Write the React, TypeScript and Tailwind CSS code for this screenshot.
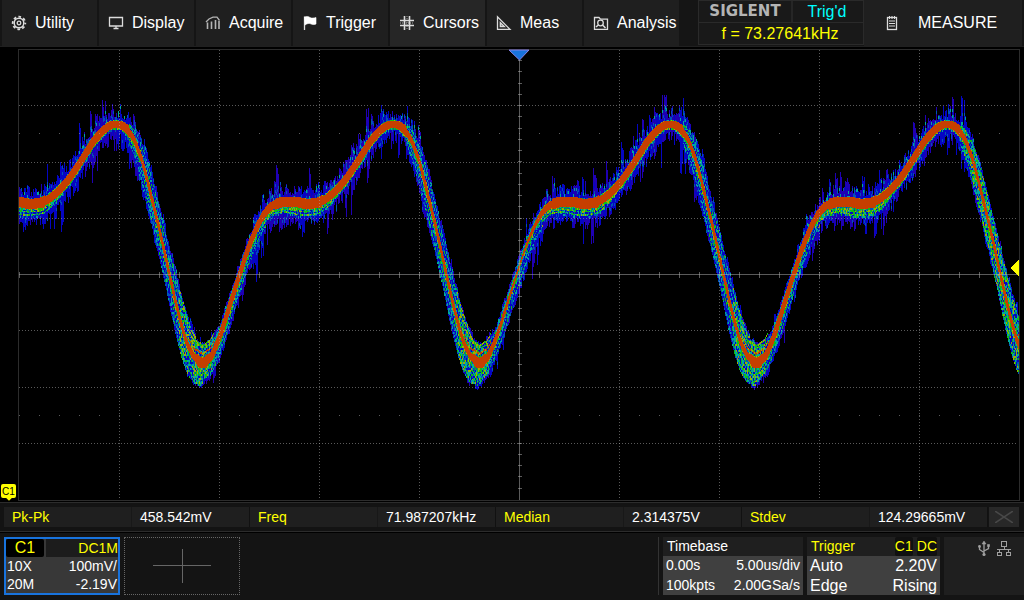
import React from "react";

const PERIOD = 277;
const PEAK_X = 116;
const TRIGGER_X = 519;

// one cycle of the trace: [offset from the peak, y]
const CYCLE = [
  [0, 124], [5, 125], [11, 129], [19, 142], [27, 165], [34, 193], [40, 217],
  [46, 243], [53, 275], [61, 310], [69, 340], [77, 357], [86, 364], [95, 357],
  [105, 332], [114, 303], [123, 275], [131, 250], [139, 230], [148, 213],
  [156, 205], [166, 202], [180, 202], [190, 204], [202, 203], [211, 198],
  [219, 191], [228, 181], [241, 162], [254, 141], [264, 130], [271, 125],
  [277, 124],
];

// how far the coloured band reaches above and below the core
const BAND = [
  [0, 4, 4], [20, 3, 5], [50, 3, 6], [70, 12, 18], [84, 18, 23], [92, 14, 14],
  [102, 4, 6], [130, 1, 4], [155, 3, 9], [180, 5, 14], [205, 5, 12],
  [225, 3, 5], [277, 4, 4],
];

// size of the blue noise above and below
const NOISE = [
  [0, 15, 19], [15, 15, 19], [32, 8, 12], [45, 5, 2], [65, 7, 1], [80, 4, 5],
  [95, 6, 9], [120, 6, 9], [140, 13, 17], [160, 16, 14], [185, 16, 12],
  [215, 15, 16], [245, 20, 20], [277, 15, 19],
];

const lerp = (points: number[][], at: number, col: number) => {
  let i = 1;
  while (i < points.length - 1 && points[i][0] < at) i++;
  const a = points[i - 1];
  const b = points[i];
  return a[col] + ((b[col] - a[col]) * (at - a[0])) / (b[0] - a[0]);
};

const phase = (x: number) =>
  (((x - PEAK_X) % PERIOD) + PERIOD) % PERIOD;

const wave = (x: number) => {
  let sum = 0;
  for (let d = -3; d <= 3; d++) sum += lerp(CYCLE, phase(x + d), 1);
  return sum / 7;
};

const COLORS = {
  violet: "#1f00b4",
  blue: "#0505c4",
  azure: "#0054b8",
  cyan: "#00a89c",
  green: "#10bd14",
  lime: "#9cae00",
  core: "#c63f00",
};
type Color = keyof typeof COLORS;

const buildTrace = () => {
  let seed = 7327;
  const rand = () => {
    seed = (seed * 1664525 + 1013904223) % 4294967296;
    return seed / 4294967296;
  };
  const pick = (list: Color[]) => list[Math.floor(rand() * list.length)];
  const paths: Record<Color, string> = {
    violet: "", blue: "", azure: "", cyan: "", green: "", lime: "", core: "",
  };
  const put = (c: Color, x: number, y1: number, y2: number) => {
    const top = Math.round(y1);
    const h = Math.round(y2) - top;
    if (h > 0) paths[c] += `M${x} ${top}h1v${h}h-1z`;
  };

  // a burst lifts one to three neighbouring columns together
  const makeBurst = () => {
    let left = 0;
    let size = 0;
    return () => {
      if (left > 0) {
        left--;
        return size * (0.6 + rand() * 0.4);
      }
      if (rand() > 0.8) {
        left = Math.floor(rand() * 3);
        size = 0.7 + rand() * rand() * 1.7;
        return size;
      }
      return 0.1 + rand() * 0.6;
    };
  };
  const burstUp = makeBurst();
  const burstDown = makeBurst();
  let mood = 0.5;

  for (let x = 19; x < 1019; x++) {
    const p = phase(x);
    const y = wave(x);
    const slope = Math.abs(wave(x + 1) - wave(x - 1)) / 2;
    const falling = p > 12 && p < 80;
    const rising = p > 92 && p < 150;
    const shelf = p > 158 && p < 206;
    const tight = Math.min(1, 0.3 + Math.abs(x - TRIGGER_X) / 50);
    const body = shelf ? 5 : p > 80 && p < 92 ? 5 : 3.5;
    const half = (body + slope * (falling ? 0.5 : rising ? 1.2 : 1.6)) * tight;

    const left = falling ? 5 : 2;
    const right = falling ? 5 : rising ? 5 : 2;
    let top = y;
    let bottom = y;
    for (let s = -right; s <= left; s++) {
      const v = wave(x + s);
      top = Math.min(top, v);
      bottom = Math.max(bottom, v);
    }
    top = Math.min(top - lerp(BAND, p, 1), y - half);
    bottom = Math.max(bottom + lerp(BAND, p, 2), y + half);

    const nTop = top - lerp(NOISE, p, 1) * burstUp();
    const nBottom = bottom + lerp(NOISE, p, 2) * burstDown();
    if (rand() > 0.7) mood = rand();
    put(mood > 0.45 ? "violet" : "blue", x, nTop, nBottom);
    for (let c = top - 15; c < top; c += 3) {
      if (c > nTop && rand() > 0.62) put(pick(["azure", "blue", "azure", "cyan"]), x, c, c + 3);
    }
    for (let c = bottom; c < bottom + 12; c += 3) {
      if (c < nBottom - 3 && rand() > 0.68) put(pick(["azure", "blue", "blue"]), x, c, c + 3);
    }

    const dense =
      (p > 62 && p < 96) ||
      (x > 820 && p > 150 && p < 215) ||
      (x > 950 && falling);
    for (let c = Math.round(top / 2) * 2; c < bottom; c += 2) {
      const span = c < y ? y - half - top : bottom - y - half;
      const t = (Math.abs(c - y) - half) / Math.max(span, 1);
      let color: Color;
      if (t < 0.15) color = pick(["green", "green", "lime", "cyan", "azure"]);
      else if (dense) color = pick(["green", "cyan", "blue", "azure", "blue", "lime", "cyan"]);
      else color = pick(["blue", "blue", "blue", "azure", "cyan", "azure", "violet"]);
      put(color, x, c, c + 2);
    }

    // stray sweeps running beside the core
    [0.45, 0.85].forEach((k) => {
      const w = Math.max(1.5, slope * 0.7);
      const up = y - half - (y - half - top) * k;
      const down = y + half + (bottom - y - half) * k;
      const line: Color[] =
        slope > 1.5
          ? ["cyan", "azure", "green", "cyan"]
          : ["green", "green", "lime", "cyan"];
      if (rand() > 0.15) put(pick(line), x, up, up + w);
      if (rand() > 0.15) put(pick(line), x, down - w, down);
    });
    if (p > 70 && p < 98) {
      put(pick(["core", "lime", "core"]), x, y - half - 5, y - half - 3);
      put(pick(["lime", "green"]), x, y - half - 13, y - half - 11);
    }
    put("core", x, y - half, y + half);
  }
  return paths;
};

const TRACE = buildTrace();

const range = (n: number) => Array.from({ length: n }, (_, i) => i);

const Plot = () => (
  <svg
    viewBox="18 49 1002 452"
    preserveAspectRatio="none"
    className="h-full w-full"
    shapeRendering="crispEdges"
    role="img"
    aria-label="Channel 1 waveform"
  >
    {(Object.keys(COLORS) as Color[]).map((c) => (
      <path key={c} d={TRACE[c]} fill={COLORS[c]} />
    ))}
    <g stroke="#b4b4b4" strokeOpacity="0.5">
      {[119, 219, 319, 419, 619, 719, 819, 919].map((x) => (
        <path key={x} d={`M${x + 0.5} 50V500`} strokeDasharray="1 2" />
      ))}
      {[105, 162, 218, 330, 387, 443].map((y) => (
        <path key={y} d={`M19 ${y + 0.5}H1018`} strokeDasharray="1 2" />
      ))}
      {[133, 415].map((y) => (
        <path key={y} d={`M19 ${y + 0.5}H1018`} strokeDasharray="1 19" />
      ))}
      <path d="M19 274.5H1018M519.5 60V500" />
      {range(50).map((i) => (
        <path key={i} d={`M${19.5 + i * 20} 272V278`} />
      ))}
      {range(39).map((i) => (
        <path key={i} d={`M518 ${Math.round(60 + i * 11.25) + 0.5}H522`} />
      ))}
    </g>
    <rect x="18.5" y="49.5" width="1001" height="451" fill="none" stroke="#2c2c2c" />
    <path d="M509 50H529L519.5 60z" fill="#1873dd" stroke="#8a83e8" shapeRendering="auto" />
    <path d="M1019 260V276L1010 268z" fill="#ffff00" />
  </svg>
);

const iconProps = {
  width: 16,
  height: 16,
  viewBox: "0 0 16 16",
  fill: "none",
  stroke: "#dcdcdc",
  strokeWidth: 1.3,
  className: "shrink-0",
  "aria-hidden": true,
};

const icons: Record<string, React.ReactNode> = {
  Utility: (
    <svg {...iconProps}>
      <circle cx="8" cy="8" r="4.8" strokeWidth="1.5" />
      <circle cx="8" cy="8" r="1.8" />
      <circle cx="8" cy="8" r="6.3" strokeWidth="1.8" strokeDasharray="2.7 2.248" strokeDashoffset="1.35" />
    </svg>
  ),
  Display: (
    <svg {...iconProps}>
      <path d="M1.5 2.5H14.5V11H1.5zM8 11V13.5M5.5 13.5H10.5" />
    </svg>
  ),
  Acquire: (
    <svg {...iconProps} stroke="#b4b4b4">
      <path d="M2.5 14V7.5M6.5 14V6.5M10.5 14V5M14 14V6" strokeWidth="1.6" />
      <path d="M1 7L4 4L8 2.2H12L14.5 5.5" />
    </svg>
  ),
  Trigger: (
    <svg {...iconProps}>
      <path d="M2.5 1.5V15" />
      <path d="M2.5 2C5 1 6.5 1.5 8 2.5S12 3 14 2.5V9C12 10 10 9.5 8.5 8.8S5 8.5 3 10z" fill="#fff" stroke="#fff" strokeWidth="0.6" />
    </svg>
  ),
  Cursors: (
    <svg {...iconProps}>
      <path d="M5.5 1V15M10.5 1V15" strokeWidth="1.6" />
      <path d="M1 5.5H15M1 10.5H15" strokeWidth="1.6" />
      <path d="M8 1V15M1 8H15" strokeDasharray="1 1" strokeOpacity="0.5" />
    </svg>
  ),
  Meas: (
    <svg {...iconProps}>
      <path d="M1.5 1.8V14.3H14z" />
      <path d="M4.3 7.5V11.6H8.4z" fill="#8a8a8a" />
    </svg>
  ),
  Analysis: (
    <svg {...iconProps}>
      <path d="M1.5 14.3V2.5H6L7.5 4.2H14.5V14.3z" />
      <circle cx="7.5" cy="8" r="2.8" />
      <path d="M9.5 10L12.5 13M3 12L5.3 10" strokeWidth="1.6" />
    </svg>
  ),
};

const measurements = [
  { name: "Pk-Pk", value: "458.542mV" },
  { name: "Freq", value: "71.987207kHz" },
  { name: "Median", value: "2.314375V" },
  { name: "Stdev", value: "124.29665mV" },
];

const Header = () => (
  <header className="flex h-[47px] shrink-0 border-b border-[#202020] bg-[#151515] pl-0.5 text-base text-white">
    <nav className="mr-[19px] grid flex-1 grid-cols-7 gap-0.5">
      {Object.keys(icons).map((name) => (
        <button
          key={name}
          className={`flex items-center gap-2 pb-px pl-[9px] ${
            name === "Cursors" ? "bg-[#262626]" : "bg-[#1f1f1f]"
          }`}
        >
          {icons[name]}
          {name}
        </button>
      ))}
    </nav>
    <div className="flex h-[45px] w-[166px] flex-col border border-[#2a2a2a] bg-[#191919]">
      <div className="flex h-[22px] border-b border-[#2a2a2a] leading-[22px]">
        <span className="flex-1 border-r-2 border-[#262626] text-center font-['DejaVu_Sans'] text-[15px] leading-5 font-bold text-[#b4b4b4]">
          SIGLENT
        </span>
        <span className="w-[70px] pr-0.5 text-center text-[#00ffff]">Trig'd</span>
      </div>
      <p className="pr-0.5 text-center leading-[21px] text-[#ffff00]">f = 73.27641kHz</p>
    </div>
    <button className="mr-0.5 flex w-[158px] items-center gap-[18px] bg-[#1f1f1f] pl-5">
      <svg {...iconProps}>
        <rect x="3.5" y="2.5" width="9" height="12" />
        <path d="M5.5 1V4M8 1V4M10.5 1V4M5 6H11M5 8.5H11M5 11H11" strokeWidth="1.1" />
      </svg>
      MEASURE
    </button>
  </header>
);

const Footer = () => (
  <footer className="flex h-[68px] shrink-0 border-t border-black bg-[#141414] pt-1 pb-[5px] pl-1 text-sm text-white">
    <button className="grid w-[116px] grid-rows-3 border-2 border-[#1873dd] bg-[#383838] text-left leading-[18px]">
      <span className="flex gap-0.5">
        <span className="w-[38px] rounded-xs bg-black text-center text-base leading-[18px] text-[#ffff00]">C1</span>
        <span className="flex-1 bg-[#1c1c1c] text-right text-[#ffff00]">DC1M</span>
      </span>
      <span className="flex justify-between px-px">
        <span>10X</span>
        <span>100mV/</span>
      </span>
      <span className="flex justify-between px-px">
        <span>20M</span>
        <span>-2.19V</span>
      </span>
    </button>
    <button
      aria-label="Add channel"
      className="ml-1 flex w-[116px] items-center justify-center border border-dotted border-[#666]"
    >
      <svg width="58" height="34" viewBox="0 0 58 34" stroke="#666" shapeRendering="crispEdges">
        <path d="M0 16.5H58M29.5 0V34" />
      </svg>
    </button>

    <div className="ml-auto border-l border-[#333]" />
    <button className="ml-1 grid w-[140px] grid-rows-3 bg-[#404040] text-left leading-[19px]">
      <span className="bg-[#1f1f1f] px-1">Timebase</span>
      <span className="flex justify-between px-[3px]">
        <span>0.00s</span>
        <span>5.00us/div</span>
      </span>
      <span className="flex justify-between px-[3px]">
        <span>100kpts</span>
        <span>2.00GSa/s</span>
      </span>
    </button>
    <button className="ml-1 grid w-[133px] grid-rows-3 bg-[#404040] text-left text-base leading-[19px]">
      <span className="flex gap-1 bg-[#1f1f1f] px-[3px] text-sm leading-[19px] text-[#ffff00]">
        <span className="mr-auto pl-px">Trigger</span>
        <span className="rounded-xs bg-[#101010]">C1</span>
        <span className="rounded-xs bg-[#101010]">DC</span>
      </span>
      <span className="flex justify-between px-[3px]">
        <span>Auto</span>
        <span>2.20V</span>
      </span>
      <span className="flex justify-between px-[3px]">
        <span>Edge</span>
        <span>Rising</span>
      </span>
    </button>
    <div className="ml-1 flex w-20 gap-1 bg-[#1f1f1f] pt-[3px] pl-8">
      <svg width="16" height="18" viewBox="0 0 16 18" fill="none" stroke="#a0a0a0" strokeWidth="1.3">
        <path d="M8 3V14M3.5 7V9.5L8 12.5M12.5 5.5V8.5L8 11" />
        <path d="M6 4L8 1L10 4z" fill="#a0a0a0" strokeWidth="0.5" />
        <circle cx="8" cy="14.5" r="1.6" fill="#a0a0a0" stroke="none" />
        <circle cx="3.5" cy="6.5" r="1.4" fill="#a0a0a0" stroke="none" />
        <path d="M11.2 4.2H13.8V6.8H11.2z" fill="#a0a0a0" stroke="none" />
      </svg>
      <svg width="16" height="18" viewBox="0 0 16 18" fill="none" stroke="#a0a0a0" shapeRendering="crispEdges">
        <path d="M5.5 1.5H10.5V6.5H5.5zM8.5 7V9M1 9.5H15M3.5 10V12M12.5 10V12M1.5 12.5H5.5V15.5H1.5zM10.5 12.5H14.5V15.5H10.5z" />
      </svg>
    </div>
  </footer>
);

const App: React.FC = () => {
  return (
    <div className="flex h-screen flex-col overflow-hidden bg-black font-['Liberation_Sans',sans-serif]">
      <Header />
      <main className="relative min-h-0 flex-1 pt-0.5 pr-1 pb-px pl-[18px]">
        <Plot />
        <div className="absolute bottom-1 left-px h-[14px] w-[15px] rounded-xs bg-[#ffff00] text-center text-[10px] leading-[15px] text-black">
          C1
          <span className="absolute -bottom-0.5 left-1.5 h-1 w-1 rotate-45 bg-[#ffff00]" />
        </div>
      </main>

      <section className="flex h-[30px] shrink-0 border-y border-[#2c2c2c] bg-[#131313] pt-1 pr-[5px] pb-1 pl-1 text-sm text-white">
        <dl className="grid flex-1 grid-cols-4">
          {measurements.map((m) => (
            <div key={m.name} className="flex border-r border-[#111] bg-[#1f1f1f] leading-5">
              <dt className="w-32 border-r border-[#181818] pl-2 text-[#ffff00]">{m.name}</dt>
              <dd className="pl-2">{m.value}</dd>
            </div>
          ))}
        </dl>
        <button aria-label="Close" className="ml-px flex w-[30px] items-center justify-center bg-[#282828]">
          <svg width="18" height="12" viewBox="0 0 18 12" stroke="#484848" strokeWidth="1.5">
            <path d="M0 0L18 12M18 0L0 12" />
          </svg>
        </button>
      </section>
      <Footer />
    </div>
  );
};

export default App;
